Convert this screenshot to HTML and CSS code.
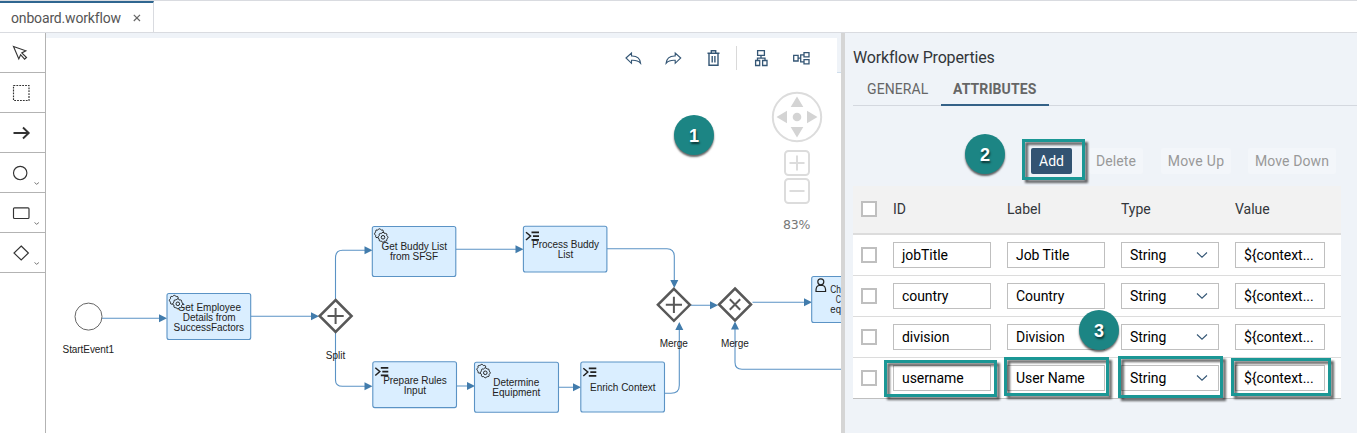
FILE: index.html
```html
<!DOCTYPE html>
<html lang="en">
<head>
<meta charset="utf-8">
<title>onboard.workflow</title>
<link rel="stylesheet" href="styles.css">
</head>
<body>
<div class="app">
  <header class="tabbar">
    <div class="file-tab"><span class="file-name">onboard.workflow</span>
      <svg class="close" width="8" height="8" viewBox="0 0 8 8"><path d="M.8.8l6.2 6.2M7 .8L.8 7"/></svg>
    </div>
  </header>
  <main class="workspace">
    <nav class="palette">
      <div class="tool"><svg width="46" height="39" viewBox="0 33 46 39"><path d="M13.500 46.500l12.300 4.300-4 2.200 4.700 4.500-1.900 1.700-4-4.500-1.800 4.200z"/></svg></div>
      <div class="tool"><svg width="46" height="39" viewBox="0 73 46 39"><rect x="13.500" y="85.500" width="15.500" height="15" stroke-dasharray="1.800 1.100"/></svg></div>
      <div class="tool"><svg width="46" height="39" viewBox="0 113 46 39"><path class="heavy" d="M13.500 133H28.500M23 127.500l5.700 5.500-5.700 5.500"/></svg></div>
      <div class="tool"><svg width="46" height="39" viewBox="0 153 46 39"><circle cx="20.200" cy="173" r="6.700"/><path class="more" d="M34.500 182.500l2.200 1.800 2.200-1.800"/></svg></div>
      <div class="tool"><svg width="46" height="39" viewBox="0 193 46 39"><rect x="13.500" y="207.800" width="15.500" height="10.700" rx="1"/><path class="more" d="M34.500 222.500l2.200 1.800 2.200-1.800"/></svg></div>
      <div class="tool"><svg width="46" height="39" viewBox="0 233 46 39"><path d="M21.200 246l7.200 7-7.200 7-7.200-7z"/><path class="more" d="M34.500 262.500l2.200 1.800 2.200-1.800"/></svg></div>
    </nav>

    <section class="canvas">
      <div class="toolbar">
        <svg class="action" width="40" height="40" viewBox="0 0 40 40"><path d="M13 20l5.500-5v3c5.200-.2 8.600 2.400 9.100 7.300-2.200-2.400-5-3.300-9.100-3v3z"/></svg>
        <svg class="action" width="40" height="40" viewBox="0 0 40 40"><path d="M27.700 20l-5.500-5v3c-5.200-.2-8.600 2.400-9.100 7.300 2.200-2.400 5-3.300 9.100-3v3z"/></svg>
        <svg class="action" width="40" height="40" viewBox="0 0 40 40"><path d="M14.500 15.300h12M16 15.300v12h9v-12M18.300 15v-2.200h4.400V15M19.200 18v6.500M21.900 18v6.500" stroke-width="1.400"/></svg>
        <span class="separator"></span>
        <svg class="action" width="40" height="40" viewBox="0 0 40 40"><path d="M16.600 12.600h6.800v4.700h-6.800zM20 17.300v3M16.500 22.500v-2.300h7.500v2.300M14.600 22.500h4.100v5h-4.100zM21.600 22.500h4.400v5h-4.400z" stroke-width="1.300"/></svg>
        <svg class="action" width="40" height="40" viewBox="0 0 40 40"><path d="M12.700 17.300h4.400v5.700h-4.400zM17.100 20.100h2.600M23 16.800h-3.300v7H23M23 14.700h5v4.200h-5zM23 21.700h5v4.200h-5z" stroke-width="1.300"/></svg>
        <span class="toolbar-end"></span>
      </div>
      <svg class="diagram" width="795" height="346" viewBox="46 87 795 346">
        <defs>
          <path id="gear" d="M-1-4.500Q0-5.500 1-4.500Q1.900-3.300 2.500-3.900Q3.900-3.900 3.900-2.500Q3.300-1.900 4.500-1Q5.500 0 4.500 1Q3.300 1.900 3.900 2.500Q3.900 3.900 2.500 3.900Q1.900 3.300 1 4.500Q0 5.500-1 4.500Q-1.900 3.300-2.500 3.900Q-3.900 3.900-3.900 2.500Q-3.300 1.900-4.500 1Q-5.500 0-4.500-1Q-3.300-1.900-3.900-2.500Q-3.900-3.900-2.500-3.900Q-1.900-3.300-1-4.500z"/>
          <g id="gears">
            <use href="#gear" x="5.300" y="5.300"/><g class="node-fill"><use href="#gear" x="8.800" y="8.800"/></g><circle cx="8.800" cy="8.800" r="1.800"/>
          </g>
          <g id="script"><path d="M0 .7l4.500 3.800L0 8.500" stroke-width="1.500"/><path d="M5.500.8H13M7 4.600h6M5.500 8.400H13" stroke-width="1.700"/></g>
          <path id="diamond" d="M0-16L16 0 0 16-16 0z"/>
        </defs>

        <g class="nav">
          <circle cx="797" cy="117" r="24.200"/>
          <g class="nav-solid"><circle cx="797" cy="117" r="4.300"/><path d="M797 96.500l6.300 10.500h-12.600zM797 137.500l6.300-10.500h-12.600zM776.500 117l10.500-6.300v12.600zM817.500 117l-10.500-6.300v12.600z"/></g>
          <rect x="785" y="151" width="24" height="24" rx="3.500"/><rect x="785" y="179" width="24" height="24" rx="3.500"/>
          <path d="M789.500 163h15M797 155.500v15M789.500 191h15"/>
        </g>
        <text class="zoom-level" x="783" y="229" textLength="27.500">83%</text>

        <g class="flow">
          <path d="M102 318.200H160M250.500 316.300H312M335.500 299V258q0-7.700 7-7.700H366M335.500 331V380q0 6.300 7 6.300H366M456 249.200H516M607 248.800H667q7.300 0 7.300 8V281M456.500 386H467M558.500 387.200H575M664.500 393.200H671q8.300 0 8.300-8V329M690 305.200H711M752.500 302.200H805M841 369.300H742q-7 0-7-7V329"/>
          <path class="heads" d="M159 314.300v8l8-4zM311 312.300v8l8-4zM364.500 246.300v8l8-4zM364.500 382.300v8l8-4zM515.500 245.300v8l8-4zM670.300 280h8l-4 8zM467 382v8l8-4zM573 383.300v8l8-4zM675.300 330h8l-4-8zM710 301.200v8l8-4zM804 298.200v8l8-4zM731 329.500h8l-4-8z"/>
        </g>

        <circle class="event" cx="88.500" cy="316.600" r="13.500"/>
        <g class="nodes">
          <rect x="167" y="293.500" width="83.700" height="46" rx="2"/>
          <rect x="372.300" y="226.500" width="83.500" height="50" rx="2"/>
          <rect x="523.400" y="226.200" width="83.500" height="45.800" rx="2"/>
          <rect x="372.800" y="361.800" width="83.700" height="45.800" rx="2"/>
          <rect x="474.500" y="362.300" width="84" height="50" rx="2"/>
          <rect x="580.800" y="362" width="83.700" height="50" rx="2"/>
          <rect x="811.700" y="276.500" width="84" height="46" rx="2"/>
        </g>
        <g class="gateways">
          <use href="#diamond" x="335.600" y="316"/><use href="#diamond" x="673.900" y="304.800"/><use href="#diamond" x="735" y="304.500"/>
          <path class="mark" d="M327.500 316h16.200M335.600 308v16M665.800 304.800H682M673.900 296.700v16.200M729.800 299.300l10.400 10.400M740.200 299.300l-10.400 10.400"/>
        </g>
        <g class="labels">
          <text x="88.300" y="353.400" textLength="51.500">StartEvent1</text>
          <text x="209.200" y="310.600" textLength="63.500">Get Employee</text>
          <text x="209.200" y="320.600" textLength="53">Details from</text>
          <text x="208.800" y="330.600" textLength="70.500">SuccessFactors</text>
          <text x="335.500" y="358.500" textLength="19.500">Split</text>
          <text x="414.300" y="250.300" textLength="65.500">Get Buddy List</text>
          <text x="414" y="260.300" textLength="48">from SFSF</text>
          <text x="565.500" y="248.200" textLength="67">Process Buddy</text>
          <text x="565.500" y="258.200" textLength="15.500">List</text>
          <text x="414.900" y="383.500" textLength="63.500">Prepare Rules</text>
          <text x="414.900" y="393.500" textLength="22.500">Input</text>
          <text x="516.200" y="386" textLength="46">Determine</text>
          <text x="516.300" y="396" textLength="48">Equipment</text>
          <text x="622.800" y="390.500" textLength="65.500">Enrich Context</text>
          <text x="673.700" y="347" textLength="28">Merge</text>
          <text x="734.900" y="346.500" textLength="28">Merge</text>
          <text x="830.300" y="293.300" class="left" textLength="10.700" lengthAdjust="spacingAndGlyphs">Ch</text>
          <text x="835.800" y="303.300" class="left" textLength="5.200" lengthAdjust="spacingAndGlyphs">C</text>
          <text x="830.300" y="313.300" class="left" textLength="10.700" lengthAdjust="spacingAndGlyphs">eq</text>
        </g>
        <g class="symbols">
          <use href="#gears" x="169" y="295"/><use href="#gears" x="374.200" y="228.500"/><use href="#gears" x="476.500" y="364"/>
          <use href="#script" x="526" y="231.500"/><use href="#script" x="375.300" y="367"/><use href="#script" x="583.300" y="367.500"/>
          <circle cx="820.800" cy="281.800" r="3" stroke-width="1.200"/><path d="M816 291.500q-.2-5.800 3-6h3.600q3.200.2 3 6z" stroke-width="1.200"/>
        </g>
      </svg>
    </section>

    <aside class="panel">
      <h1 class="panel-title">Workflow Properties</h1>
      <div class="panel-tabs"><span class="ptab">GENERAL</span><span class="ptab active">ATTRIBUTES</span></div>
      <div class="buttons"><button class="btn primary">Add</button><button class="btn delete">Delete</button><button class="btn up">Move Up</button><button class="btn down">Move Down</button></div>
      <div class="table">
        <div class="row head"><i class="check"></i><span class="h-id">ID</span><span>Label</span><span class="h-type">Type</span><span>Value</span></div>
        <div class="row"><i class="check"></i><span class="field">jobTitle</span><span class="field">Job Title</span><span class="field select">String<svg width="12" height="8" viewBox="0 0 12 8"><path d="M1 1.500l5 4.700 5-4.700"/></svg></span><span class="field value">${context...</span></div>
        <div class="row"><i class="check"></i><span class="field">country</span><span class="field">Country</span><span class="field select">String<svg width="12" height="8" viewBox="0 0 12 8"><path d="M1 1.500l5 4.700 5-4.700"/></svg></span><span class="field value">${context...</span></div>
        <div class="row"><i class="check"></i><span class="field">division</span><span class="field">Division</span><span class="field select">String<svg width="12" height="8" viewBox="0 0 12 8"><path d="M1 1.500l5 4.700 5-4.700"/></svg></span><span class="field value">${context...</span></div>
        <div class="row"><i class="check"></i><span class="field">username</span><span class="field">User Name</span><span class="field select">String<svg width="12" height="8" viewBox="0 0 12 8"><path d="M1 1.500l5 4.700 5-4.700"/></svg></span><span class="field value">${context...</span></div>
      </div>
    </aside>
  </main>
  <div class="callout frame-add"></div>
  <div class="callout frame-id"></div>
  <div class="callout frame-label"></div>
  <div class="callout frame-type"></div>
  <div class="callout frame-value"></div>
  <div class="step step-one">1</div>
  <div class="step step-two">2</div>
  <div class="step step-three">3</div>
</div>
</body>
</html>
```
FILE: styles.css
```css
* { box-sizing: border-box; }
body { margin: 0; overflow: hidden; font-family: Roboto, "Liberation Sans", sans-serif; font-size: 14px; color: #32363a; }
svg { display: block; flex: none; fill: none; }
.app { position: relative; width: 1357px; height: 433px; display: flex; flex-direction: column; overflow: hidden; background: #fff; }

.tabbar { height: 33px; display: flex; border-top: 1px solid #d9dbe0; border-bottom: 1px solid #d9dbe0; }
.file-tab { width: 154px; border-top: 2px solid #2f6690; border-right: 1px solid #d9dbe0; display: flex; align-items: center; padding: 1px 0 0 11px; }
.file-name { width: 122px; color: #555; letter-spacing: -.16px; }
.close { stroke: #666; stroke-width: 1.2; }

.workspace { height: 400px; display: flex; }
.palette { width: 46px; border-right: 1px solid #b3b3b3; overflow: hidden; flex: none; }
.tool { height: 40px; border-bottom: 1px solid #b3b3b3; }
.tool svg { stroke: #333; stroke-width: 1.15; }
.tool .heavy { stroke-width: 1.9; }
.tool .more { stroke: #777; stroke-width: 1; }

.canvas { width: 795px; flex: none; }
.toolbar { height: 54px; border-top: 5px solid #eff3f8; padding-left: 567px; display: flex; align-items: flex-start; }
.action { stroke: #345675; stroke-width: 1.1; }
.separator { width: 1px; height: 24px; background: #d9d9d9; margin: 8px 4px 0 3px; }
.toolbar-end { width: 4px; height: 35px; background: #eff3f8; border-bottom: 1px solid #cfdeec; margin-left: auto; }
.nav { stroke: #dcdcdc; stroke-width: 2; }
.nav-solid { fill: #d4d4d4; stroke: none; }
.zoom-level { fill: #777; font-family: "DejaVu Sans", sans-serif; font-size: 12.5px; }
.flow { stroke: #5b93c5; stroke-width: 1.1; }
.flow .heads { fill: #427cac; stroke: none; }
.event { stroke: #666; fill: #fff; }
.nodes { fill: #daeeff; stroke: #5b93c5; stroke-width: 1.1; }
.gateways { fill: #fff; stroke: #585858; stroke-width: 2.5; }
.gateways .mark { stroke-width: 2; }
.labels { font-family: "Liberation Sans", Arial, sans-serif; font-size: 10px; fill: #222; text-anchor: middle; }
.labels .left { text-anchor: start; }
.symbols { stroke: #222; stroke-width: 1; }
.node-fill { fill: #daeeff; }

.panel { width: 516px; flex: none; background: #eff3f8; border-left: 4px solid #d5d5d5; padding-left: 8px; }
.panel-title { margin: 0; height: 40px; padding-top: 15px; font-size: 16px; line-height: 20px; font-weight: 400; letter-spacing: -.17px; }
.panel-tabs { height: 33px; display: flex; border-bottom: 1px solid #d4d8df; }
.ptab { height: 33px; line-height: 33px; padding-left: 14px; width: 88px; color: #666; letter-spacing: .1px; }
.ptab.active { width: 108px; padding-left: 12px; font-weight: 700; border-bottom: 2px solid #346187; }
.buttons { height: 80px; padding: 42px 0 0 178px; display: flex; align-items: flex-start; }
.btn { height: 26px; border: 0; padding: 0; border-radius: 2px; background: #f3f6fa; color: #999; font: 14px/26px Roboto, sans-serif; letter-spacing: .1px; }
.btn.primary { width: 41px; background: #325372; color: #fff; letter-spacing: 0; }
.delete { width: 54px; margin-left: 17px; }
.up { width: 70px; margin-left: 18px; }
.btn.up { letter-spacing: .3px; }
.down { width: 88px; margin-left: 17px; }
.table { width: 488px; background: #fff; }
.row { height: 41px; display: grid; grid-template-columns: 16px 98px 98px 98px 90px; column-gap: 16px; align-items: center; padding-left: 8px; border-bottom: 1px solid #dcdcdc; }
.row.head { height: 49px; padding-bottom: 1px; background: #f2f2f2; border-bottom: 2px solid #dcdcdc; letter-spacing: 0; }
.row:last-child { border-color: #bfbfbf; }
.check { width: 16px; height: 16px; border: 2px solid #bfbfbf; background: #fff; }
.field { height: 26px; line-height: 24px; border: 1px solid #bfbfbf; padding-left: 8px; color: #000; letter-spacing: -.06px; white-space: nowrap; }
.select { display: flex; align-items: center; justify-content: space-between; padding-right: 10px; }
.select svg { stroke: #345675; stroke-width: 1.1; }

.callout { position: absolute; border: 3px solid #1b9795; filter: drop-shadow(3px 3px 1px rgba(0,0,0,.6)); }
.frame-add { left: 1022px; top: 139px; width: 63px; height: 41px; }
.frame-id { left: 884px; top: 360px; width: 113px; height: 37px; }
.frame-label { left: 1004px; top: 357px; width: 105px; height: 39px; }
.frame-type { left: 1118px; top: 356px; width: 105px; height: 42px; }
.frame-value { left: 1231px; top: 358px; width: 100px; height: 38px; }
.step { position: absolute; width: 40px; height: 40px; border-radius: 50%; background: #1c8584; color: #fff; font: 700 18px/42px "Liberation Sans", Arial, sans-serif; text-align: center; box-shadow: 0 2px 2px rgba(0,0,0,.6); text-shadow: 1px 2px 2px rgba(0,0,0,.6); }
.step-one { left: 674px; top: 115px; }
.step-two { left: 965px; top: 134px; }
.step-three { left: 1079px; top: 310px; }
```
